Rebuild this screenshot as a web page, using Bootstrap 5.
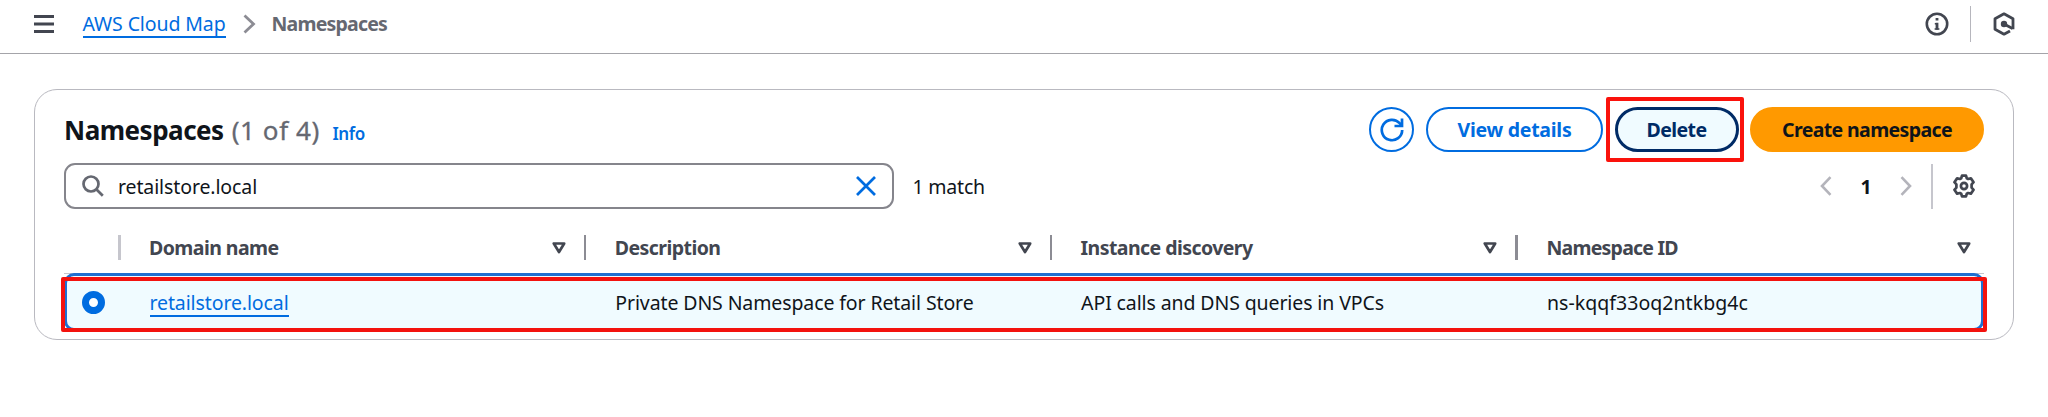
<!DOCTYPE html>
<html lang="en">
<head>
<meta charset="utf-8">
<title>Namespaces - AWS Cloud Map</title>
<meta name="viewport" content="width=device-width, initial-scale=1">
<link href="https://cdn.jsdelivr.net/npm/bootstrap@5.3.0/dist/css/bootstrap.min.css" rel="stylesheet">
<style>
  body { font-family: "Noto Sans", "Open Sans", sans-serif; font-size: 19.5px; line-height: 28px; letter-spacing: -.11px; color: #0f141a; background: #fff; overflow: hidden; }
  svg { display: block; flex: none; fill: none; }
  .topbar { height: 54px; border-bottom: 1px solid #a4a4a9; padding: 0 33px 5px 34px; color: #424650; }
  .lnk { color: #006ce0; text-decoration: none; border-bottom: 2px solid #006ce0; line-height: 25px; white-space: nowrap; }
  .crumb-now { color: #656871; font-weight: 700; letter-spacing: -.8px; }
  .panel { margin: 34.500px 34px 0; height: 251.500px; border: 1px solid #b9b9c0; border-radius: 23px; padding: 17.5px 29px 0 29px; }
  .ttl { font-size: 26px; font-weight: 700; letter-spacing: -.5px; line-height: 36px; margin: 0; }
  .cnt { font-size: 26px; letter-spacing: .6px; line-height: 36px; color: #656871; margin-left: 8px; -webkit-text-stroke: .3px #656871; }
  .info { font-size: 17px; font-weight: 600; letter-spacing: -.4px; color: #006ce0; text-decoration: none; margin-left: 12.5px; }
  .pill { height: 45px; border: 2px solid #006ce0; border-radius: 23px; color: #006ce0; font-size: 19.5px; line-height: 28px; font-weight: 700; letter-spacing: -.27px; padding: 1px 0 0; display: flex; align-items: center; justify-content: center; white-space: nowrap; }
  .pill-refresh { width: 45px; padding: 0; }
  .pill-view { width: 177px; margin-left: 12px; }
  .pill-delete { width: 124px; border-width: 3px; border-color: #002b66; color: #002b66; background: #f0fbff; letter-spacing: -.55px; }
  .pill-create { width: 234px; border-color: #ff9900; background: #ff9900; color: #0f141a; letter-spacing: -.62px; margin-left: 11.5px; }
  .marked { position: relative; margin-left: 11.5px; }
  .marked::after { content: ""; position: absolute; inset: -10px -5.5px -10px -9px; border: 4px solid #fa120c; border-radius: 2px; }
  .search { width: 830px; height: 46px; border: 2px solid #85858c; border-radius: 11px; padding: 0 16.500px 0 16px; }
  .toolrow { margin-top: 11px; }
  .toolrow span, .toolrow b { padding-top: 1.5px; }
  .bar { width: 1.5px; height: 45px; background: #c6c6cd; }
  .tgrid { display: grid; grid-template-columns: 85px repeat(3, 465.8px) 1fr; align-items: center; }
  .thead-row { height: 65px; padding-top: 13px; border-bottom: 1.5px solid #c6c6cd; color: #424650; font-weight: 700; letter-spacing: -.56px; }
  .hcell { padding-right: 28.5px; white-space: nowrap; }
  .hcell.last { padding-right: 13px; }
  .sep { width: 2.5px; height: 25px; background: #8c8c94; margin-left: 18px; }
  .selected { position: relative; height: 58px; margin-top: -1px; border: 3px solid #1f6fd0; border-radius: 10px; background: #f0fbff; }
  .selected > div { white-space: nowrap; }
  .cell-in { margin-left: -2.5px; padding-top: 1.5px; }
  .selected::after { content: ""; position: absolute; inset: 1px -6px -4px -6px; border: 4px solid #f3120e; border-radius: 2px; }
  .radio-on { width: 23px; height: 23px; border: 7px solid #006ce0; border-radius: 50%; background: #fff; margin-left: 15px; }
</style>
</head>
<body>
<header class="topbar d-flex align-items-center">
  <svg width="20" height="18" viewBox="0 0 20 18" stroke="currentColor" stroke-width="2.8"><path d="M0 1.5h20M0 9h20M0 16.5h20"/></svg>
  <a href="#" class="lnk" style="margin-left:28.5px">AWS Cloud Map</a>
  <svg width="13" height="20" viewBox="0 0 13 20" stroke="#8c8c94" stroke-width="2.8" style="margin-left:17px"><path d="M1.5 1.5 10.5 10l-9 8.500"/></svg>
  <span class="crumb-now" style="margin-left:16px">Namespaces</span>
  <div class="ms-auto d-flex align-items-center">
    <svg width="24" height="24" viewBox="0 0 24 24" stroke="currentColor" stroke-width="2.6"><circle cx="12" cy="12" r="10.200"/><path d="M12 6v2.600M12 10.700v7" stroke-width="2.800"/><path d="M9.800 11.700H12M9.600 17h4.800" stroke-width="1.600"/></svg>
    <div style="width:1.2px;height:36px;background:#b6b6bd;margin:0 22px 0 21px"></div>
    <svg width="22" height="24" viewBox="0 0 22 24" stroke="currentColor" stroke-width="2.800" stroke-linejoin="round"><path d="M20 17.200V6.800L11 1.800 2 6.800v10.400l9 5 6-3.300"/><path d="m11 12 8.500 4.500"/><circle cx="11" cy="12" r="3.200" fill="currentColor" stroke="none"/></svg>
  </div>
</header>
<main class="panel">
  <div class="d-flex align-items-center">
    <div class="d-flex align-items-baseline">
      <h1 class="ttl">Namespaces</h1><span class="cnt">(1 of 4)</span><a href="#" class="info">Info</a>
    </div>
    <div class="ms-auto d-flex align-items-center">
      <button class="btn pill pill-refresh" aria-label="Refresh"><svg width="24" height="24" viewBox="0 0 24 24" stroke="currentColor" stroke-width="2.700"><path d="M22.200 12A10.200 10.200 0 1 1 19.600 5.200L21.500 7.500"/><path d="M22 .500V8h-7.500"/></svg></button>
      <button class="btn pill pill-view">View details</button>
      <div class="marked"><button class="btn pill pill-delete">Delete</button></div>
      <button class="btn pill pill-create">Create namespace</button>
    </div>
  </div>
  <div class="toolrow d-flex align-items-center">
    <div class="search d-flex align-items-center">
      <svg width="22" height="22" viewBox="0 0 22 22" stroke="#656871" stroke-width="2.700"><circle cx="9" cy="9" r="7.500"/><path d="m14.300 14.300 6.500 6.500"/></svg>
      <span style="margin-left:14px">retailstore.local</span>
      <svg class="ms-auto" width="20" height="20" viewBox="0 0 20 20" stroke="#006ce0" stroke-width="2.700"><path d="m1 1 18 18M19 1 1 19"/></svg>
    </div>
    <span style="margin-left:18.5px;letter-spacing:-.2px">1 match</span>
    <div class="ms-auto d-flex align-items-center">
      <svg width="12" height="20" viewBox="0 0 12 20" stroke="#b4b4bb" stroke-width="2.600"><path d="M10.500 1.200 2 10l8.500 8.800"/></svg>
      <b style="margin:0 28px">1</b>
      <svg width="12" height="20" viewBox="0 0 12 20" stroke="#b4b4bb" stroke-width="2.600"><path d="m1.500 1.200 8.500 8.800-8.500 8.800"/></svg>
      <div class="bar" style="margin:0 19.5px"></div>
      <svg width="24" height="24" viewBox="0 0 24 24" stroke="#424650" stroke-width="2.700" stroke-linejoin="round" style="margin-right:8px"><path d="M9.200 4.300 10 1.600h4l.8 2.700 1.300.7 2.800-.6 2.700 3.800-2 2.200v3.200l2 2.200-2.700 3.800-2.800-.6-1.300.7-.8 2.700h-4l-.8-2.700-1.300-.7-2.800.6-2.700-3.800 2-2.200v-3.200l-2-2.200 2.700-3.800 2.800.6z"/><circle cx="12" cy="12" r="3.100"/></svg>
    </div>
  </div>
  <div class="tgrid thead-row">
    <div><div class="sep" style="margin-left:54px;background:#c6c6cd"></div></div>
    <div class="hcell d-flex align-items-center"><span>Domain name</span><svg class="ms-auto" width="14" height="12" viewBox="0 0 14 12" stroke="currentColor" stroke-width="2.700" stroke-linejoin="round"><path d="M1.800 1.500h10.400L7 10z"/></svg><div class="sep"></div></div>
    <div class="hcell d-flex align-items-center"><span>Description</span><svg class="ms-auto" width="14" height="12" viewBox="0 0 14 12" stroke="currentColor" stroke-width="2.700" stroke-linejoin="round"><path d="M1.800 1.500h10.400L7 10z"/></svg><div class="sep"></div></div>
    <div class="hcell d-flex align-items-center"><span>Instance discovery</span><svg class="ms-auto" width="14" height="12" viewBox="0 0 14 12" stroke="currentColor" stroke-width="2.700" stroke-linejoin="round"><path d="M1.800 1.500h10.400L7 10z"/></svg><div class="sep"></div></div>
    <div class="hcell last d-flex align-items-center"><span style="letter-spacing:-.76px">Namespace ID</span><svg class="ms-auto" width="14" height="12" viewBox="0 0 14 12" stroke="currentColor" stroke-width="2.700" stroke-linejoin="round"><path d="M1.800 1.500h10.400L7 10z"/></svg></div>
  </div>
  <div class="tgrid selected">
    <div><div class="radio-on"></div></div>
    <div class="cell-in"><a href="#" class="lnk d-inline-block">retailstore.local</a></div>
    <div class="cell-in">Private DNS Namespace for Retail Store</div>
    <div class="cell-in">API calls and DNS queries in VPCs</div>
    <div class="cell-in" style="letter-spacing:.05px">ns-kqqf33oq2ntkbg4c</div>
  </div>
</main>
<script src="https://cdn.jsdelivr.net/npm/bootstrap@5.3.0/dist/js/bootstrap.bundle.min.js"></script>
</body>
</html>
